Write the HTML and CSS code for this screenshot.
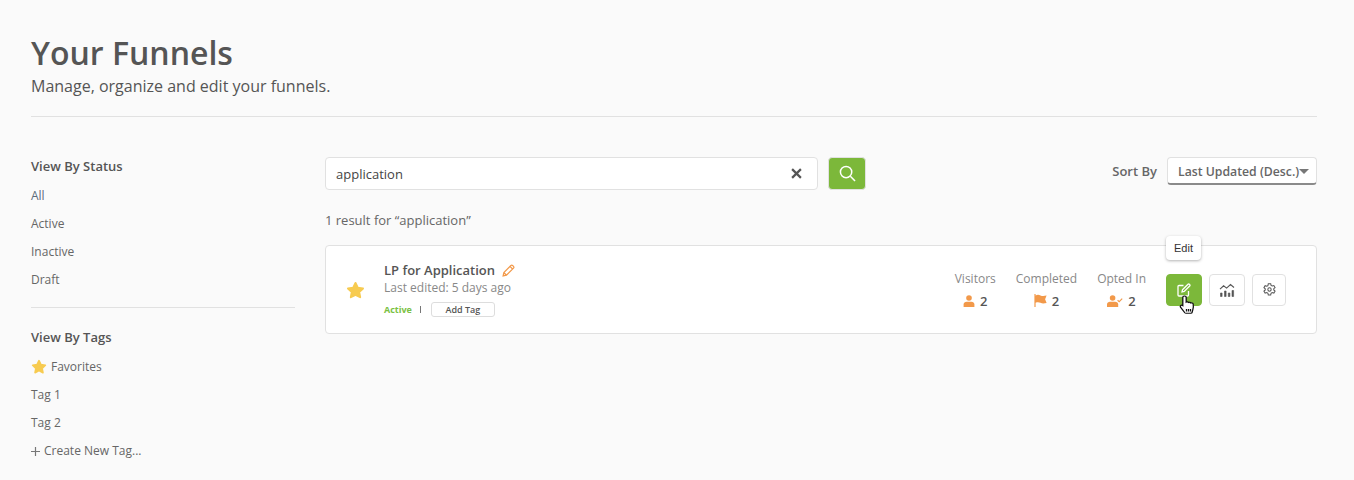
FILE: index.html
```html
<!DOCTYPE html>
<html lang="en">
<head>
    <meta charset="UTF-8">
    <meta name="viewport" content="width=device-width, initial-scale=1.0">
    <title>Your Funnels</title>
    <link rel="stylesheet" href="styles.css">
</head>
<body>
    <header class="page-header">
        <h1>Your Funnels</h1>
        <p>Manage, organize and edit your funnels.</p>
    </header>

    <div class="layout">
        <aside class="sidebar">
            <h3>View By Status</h3>
            <ul class="side-list">
                <li class="selected">All</li>
                <li>Active</li>
                <li>Inactive</li>
                <li>Draft</li>
            </ul>
            <hr class="side-rule">
            <h3>View By Tags</h3>
            <ul class="side-list">
                <li class="with-icon">
                    <svg class="side-star" viewBox="0 0 24 24"><path d="M12 2.500l2.900 6 6.600.9-4.800 4.600 1.200 6.500-5.900-3.100-5.900 3.100 1.200-6.500-4.800-4.600 6.600-.9z"/></svg>
                    Favorites
                </li>
                <li>Tag 1</li>
                <li>Tag 2</li>
                <li class="with-icon create-tag">
                    <svg class="plus" viewBox="0 0 9 9"><path d="M4.500 0v9M0 4.500h9"/></svg>
                    Create New Tag...
                </li>
            </ul>
        </aside>

        <main class="content">
            <div class="toolbar">
                <div class="search-box">
                    <span>application</span>
                    <svg class="clear" viewBox="0 0 10 10"><path d="M1 1l8 8M9 1l-8 8"/></svg>
                </div>
                <button class="search-btn">
                    <svg viewBox="0 0 18 18"><circle cx="7.500" cy="7.500" r="6"/><path d="M12 12l5 5"/></svg>
                </button>
                <div class="sort">
                    <label>Sort By</label>
                    <div class="sort-select">Last Updated (Desc.)<span class="caret"></span></div>
                </div>
            </div>

            <p class="result-count">1 result for “application”</p>

            <div class="funnel-card">
                <svg class="card-star" viewBox="0 0 24 24"><path d="M12 2.500l2.900 6 6.600.9-4.800 4.600 1.200 6.500-5.900-3.100-5.900 3.100 1.200-6.500-4.800-4.600 6.600-.9z"/></svg>
                <div class="funnel-info">
                    <div class="funnel-name">
                        LP for Application
                        <svg class="pencil" viewBox="0 0 14 14"><path d="M1.200 12.800l.8-3.600L9.600 1.600a1.300 1.300 0 0 1 1.800 0l1 1a1.300 1.300 0 0 1 0 1.800L4.800 12zM8.600 2.600l2.800 2.800M2 9.200L4.800 12"/></svg>
                    </div>
                    <div class="funnel-edited">Last edited: 5 days ago</div>
                    <div class="funnel-meta">
                        <span class="status">Active</span>
                        <span class="sep"></span>
                        <span class="add-tag">Add Tag</span>
                    </div>
                </div>

                <div class="stats">
                    <div class="stat">
                        <span class="stat-label">Visitors</span>
                        <span class="stat-value">
                            <svg viewBox="0 0 12 12" width="12" height="12"><circle cx="6" cy="3" r="2.800"/><path d="M.6 12V9.600C.6 7.800 2 6.800 3.600 6.800h4.800c1.600 0 3 1 3 2.800V12z"/></svg>
                            2
                        </span>
                    </div>
                    <div class="stat">
                        <span class="stat-label">Completed</span>
                        <span class="stat-value">
                            <svg viewBox="0 0 13 13" width="13" height="13"><path d="M.4 0h1.200v13H.4zM1.600 1.400c2-.9 3.400-.6 4.900 0s3 .8 6.100.1l-1.500 3.700 1.500 3.700c-3 .8-4.600.5-6.100-.1s-2.900-.8-4.900-.1z"/></svg>
                            2
                        </span>
                    </div>
                    <div class="stat">
                        <span class="stat-label">Opted In</span>
                        <span class="stat-value">
                            <svg viewBox="0 0 16 12" width="16" height="12"><circle cx="5.600" cy="3" r="2.800"/><path d="M0 12V9.600C0 7.800 1.400 6.800 3 6.800h5.200c1.600 0 3 1 3 2.800V12z"/><path class="tick" d="M10.600 5.200l1.600 1.500 3-3"/></svg>
                            2
                        </span>
                    </div>
                </div>

                <div class="actions">
                    <button class="action action-edit">
                        <span class="tooltip">Edit</span>
                        <svg viewBox="0 0 14 14" width="14" height="14"><path d="M11.500 8v4a1 1 0 0 1-1 1H2a1 1 0 0 1-1-1V3.500a1 1 0 0 1 1-1h4.500"/><path d="M5.500 6.800L11 1.300a1 1 0 0 1 1.400 0l.3.300a1 1 0 0 1 0 1.400L7.200 8.500l-2.200.4z"/></svg>
                        <svg class="cursor" viewBox="0 0 18 23" width="18" height="20" preserveAspectRatio="none"><path d="M5.500 1.200c1 0 1.700.7 1.700 1.700v5.300c.7-.5 1.900-.3 2.300.4.700-.4 1.800-.2 2.200.6.800-.4 2.300 0 2.500 1.200.2 1.600.2 4.300-.3 6.200l-.8 3.400c-.1.600-.6 1-1.200 1H7c-.5 0-.9-.2-1.200-.6L1.500 14c-.8-1.200.6-2.900 2-2l.3.200V2.900c0-1 .7-1.700 1.700-1.700z"/><path class="fingers" d="M7.500 19v-3M9.500 19v-3M11.500 19v-3"/></svg>
                    </button>
                    <button class="action">
                        <svg class="chart" viewBox="0 0 16 14" width="16" height="14"><path class="line" d="M1 6.200l3.600-3.400 3 2.300L11.500 1.500l3.500 3"/><path class="bars" d="M1.500 10h1.600v3.500H1.500zM5.500 8h1.600v5.500H5.500zM9.300 10h1.600v3.500H9.300zM13 7.500h1.600v6H13z"/></svg>
                    </button>
                    <button class="action action-small">
                        <svg class="gear" viewBox="0 0 14 14" width="13" height="13"><circle cx="7" cy="7" r="1.800"/><path d="M5.700 .8h2.600l.4 1.800 1.200.7 1.800-.6 1.300 2.200-1.400 1.200v1.400l1.400 1.200-1.300 2.200-1.800-.6-1.200.7-.4 1.800H5.700l-.4-1.800-1.200-.7-1.800.6L1 8.700l1.400-1.200V6.300L1 5.100l1.300-2.200 1.800.6 1.200-.7z"/></svg>
                    </button>
                </div>
            </div>
        </main>
    </div>
</body>
</html>
```

FILE: styles.css
```css
* {
    box-sizing: border-box;
}

html, body {
    height: 480px;
    overflow: hidden;
}

body {
    font-family: "Open Sans", Arial, sans-serif;
    background-color: #fafafa;
    color: #555;
    margin: 0;
    padding: 29px 37px 0 31px;
}

.page-header {
    border-bottom: 1px solid #e1e1e1;
    height: 88px;
}

.page-header h1 {
    margin: 0;
    font-size: 32px;
    line-height: 48px;
    font-weight: 600;
    color: #555;
}

.page-header p {
    margin: -1px 0 0;
    font-size: 16px;
    line-height: 20px;
    color: #555;
}

.layout {
    display: flex;
    margin-top: 40px;
}

.sidebar {
    width: 264px;
    margin-right: 30px;
    flex-shrink: 0;
}

.sidebar h3 {
    margin: 0;
    font-size: 13px;
    line-height: 18px;
    font-weight: 600;
    color: #555;
}

.side-list {
    list-style: none;
    margin: 7px 0 0;
    padding: 0;
}

.side-list li {
    font-size: 12px;
    line-height: 28px;
    color: #666;
}

.side-list li.selected {
    color: #5b6b7b;
}

.side-list li.with-icon {
    display: flex;
    align-items: center;
}

.side-star {
    width: 16px;
    height: 16px;
    margin-right: 4px;
    fill: #f7cb50;
    stroke: #f7cb50;
    stroke-width: 2.5;
    stroke-linejoin: round;
}

.plus {
    width: 9px;
    height: 9px;
    margin-right: 4px;
    stroke: #777;
    fill: none;
    stroke-width: 1.2;
}

.side-rule {
    border: 0;
    border-top: 1px solid #e1e1e1;
    margin: 13px 0 20px;
}

.content {
    flex: 1;
    min-width: 0;
}

.toolbar {
    display: flex;
    align-items: flex-start;
}

.search-box {
    width: 493px;
    height: 33px;
    background: #fff;
    border: 1px solid #e1e1e1;
    border-radius: 4px;
    padding: 0 15px 0 10px;
    display: flex;
    align-items: center;
    justify-content: space-between;
    font-size: 13px;
    color: #444;
}

.clear {
    width: 11px;
    height: 11px;
    stroke: #555;
    stroke-width: 2;
    fill: none;
}

.search-btn {
    width: 38px;
    height: 33px;
    margin-left: 10px;
    background: #7cb83a;
    border: 1px solid #e1e1e1;
    border-radius: 4px;
    padding: 0;
    display: flex;
    align-items: center;
    justify-content: center;
}

.search-btn svg {
    width: 17px;
    height: 17px;
    stroke: #fff;
    stroke-width: 1.6;
    fill: none;
}

.sort {
    margin-left: auto;
    display: flex;
    align-items: center;
}

.sort label {
    font-size: 13px;
    font-weight: 600;
    color: #666;
    margin-right: 10px;
}

.sort-select {
    width: 150px;
    height: 28px;
    background: #fff;
    border: 1px solid #e1e1e1;
    border-bottom: 2px solid #8a8a8a;
    border-radius: 4px;
    padding: 1px 0 0 10px;
    display: flex;
    align-items: center;
    font-size: 12.25px;
    font-weight: 600;
    color: #666;
    white-space: nowrap;
}

.caret {
    border-left: 5px solid transparent;
    border-right: 5px solid transparent;
    border-top: 5px solid #777;
}

.result-count {
    margin: 21px 0 16px;
    font-size: 13px;
    line-height: 18px;
    color: #666;
}

.funnel-card {
    height: 89px;
    background: #fff;
    border: 1px solid #e1e1e1;
    border-radius: 4px;
    display: flex;
    align-items: center;
    padding: 0 30px 0 20px;
}

.card-star {
    width: 19px;
    height: 19px;
    fill: #f7cb50;
    stroke: #f7cb50;
    stroke-width: 2.5;
    stroke-linejoin: round;
    margin: 2px 19px 0 0;
}

.funnel-info {
    margin-top: -1px;
}

.funnel-name {
    font-size: 13px;
    line-height: 18px;
    font-weight: 600;
    color: #555;
    display: flex;
    align-items: center;
}

.pencil {
    width: 13px;
    height: 13px;
    margin-left: 7px;
    stroke: #f2994a;
    stroke-width: 1.3;
    fill: none;
}

.funnel-edited {
    font-size: 12px;
    line-height: 17px;
    color: #888;
}

.funnel-meta {
    display: flex;
    align-items: center;
    margin-top: 6px;
}

.status {
    font-size: 9px;
    font-weight: 700;
    color: #7ac143;
}

.sep {
    width: 1px;
    height: 7px;
    background: #777;
    margin: 0 10px 0 8px;
}

.add-tag {
    width: 64px;
    height: 15px;
    border: 1px solid #ddd;
    border-radius: 3px;
    font-size: 9px;
    font-weight: 600;
    line-height: 13px;
    text-align: center;
    color: #555;
}

.stats {
    margin-left: auto;
    display: flex;
    gap: 20px;
}

.stat {
    display: flex;
    flex-direction: column;
    align-items: center;
}

.stat-label {
    font-size: 12px;
    line-height: 18px;
    color: #888;
}

.stat-value {
    display: flex;
    align-items: center;
    gap: 5px;
    margin-top: 4px;
    font-size: 13px;
    line-height: 18px;
    font-weight: 600;
    color: #555;
}

.stat-value svg {
    fill: #f2994a;
}

.stat-value .tick {
    fill: none;
    stroke: #f2994a;
    stroke-width: 1.2;
}

.actions {
    display: flex;
    gap: 7px;
    margin-left: 20px;
}

.action {
    position: relative;
    width: 36px;
    height: 32px;
    padding: 0;
    background: #fff;
    border: 1px solid #e1e1e1;
    border-radius: 4px;
    display: flex;
    align-items: center;
    justify-content: center;
}

.action-small {
    width: 34px;
}

.action svg {
    fill: none;
    stroke: #555;
    stroke-width: 1.1;
}

.action .chart .bars {
    fill: #555;
    stroke-width: 0.6;
}

.action-edit {
    background: #7cb83a;
    border-color: #7cb83a;
}

.action-edit svg {
    stroke: #fff;
    stroke-width: 1.3;
}

.action-edit .cursor {
    position: absolute;
    left: 12px;
    top: 20px;
    fill: #fff;
    stroke: #111;
    stroke-width: 1.3;
}

.tooltip {
    position: absolute;
    left: -1px;
    top: -39px;
    width: 35px;
    height: 24px;
    background: #fff;
    border-radius: 4px;
    box-shadow: 0 1px 3px rgba(0, 0, 0, 0.3);
    font-family: "Liberation Sans", Arial, sans-serif;
    font-size: 11px;
    line-height: 24px;
    text-align: center;
    color: #333;
}
```
